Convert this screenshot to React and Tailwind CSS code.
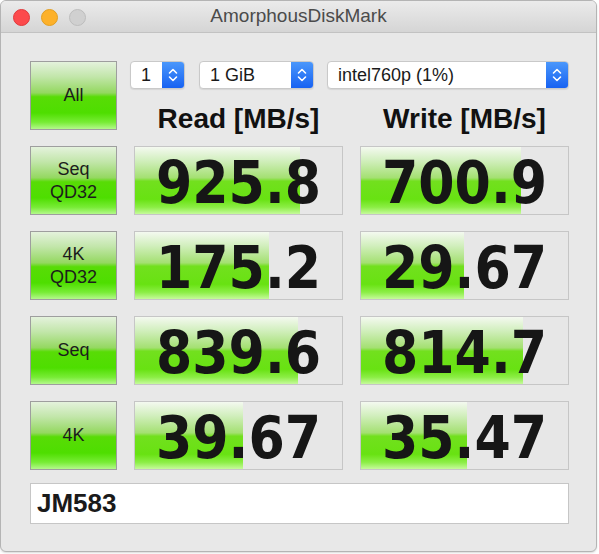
import React from 'react';

const rows = [
  { label: ['Seq', 'QD32'], read: { value: '925.8', bar: 165 }, write: { value: '700.9', bar: 160 } },
  { label: ['4K', 'QD32'], read: { value: '175.2', bar: 134 }, write: { value: '29.67', bar: 103 } },
  { label: ['Seq'], read: { value: '839.6', bar: 163 }, write: { value: '814.7', bar: 162 } },
  { label: ['4K'], read: { value: '39.67', bar: 108 }, write: { value: '35.47', bar: 106 } },
];

const sans = { fontFamily: '"Liberation Sans", Arial, sans-serif' };

function GreenButton({ lines }) {
  return (
    <div className="h-[69px] border border-[#9e9e9e] bg-[linear-gradient(to_bottom,#e4f2dc_0%,#c2e6aa_22%,#94d860_46%,#58dc06_52%,#4ede00_76%,#78ec36_90%,#b4f88c_100%)] flex flex-col items-center justify-center text-[18px] leading-[23px] text-[#1c1c1c]">
      {lines.map((l) => (
        <span key={l}>{l}</span>
      ))}
    </div>
  );
}

function ValueBox({ value, bar }) {
  return (
    <div className="relative h-[69px] border border-[#c6c6c6] bg-[#e7e7e7]">
      <div
        className="absolute left-0 top-0 bottom-0 bg-[linear-gradient(to_bottom,#f4f9f0_0%,#d2efbe_20%,#a4e072_46%,#72e01e_51%,#68e212_78%,#8cee46_90%,#c6fa9c_100%)]"
        style={{ width: bar }}
      />
      <div
        className="relative pt-[6px] text-center text-[58px] leading-[61px] font-bold text-[#161616] font-stretch-condensed"
        style={{ fontFamily: '"DejaVu Sans Condensed", "DejaVu Sans", Verdana, sans-serif' }}
      >
        {value}
      </div>
    </div>
  );
}

function Chevrons() {
  return (
    <svg width="10" height="16" viewBox="0 0 10 16" fill="none" stroke="white" strokeWidth="1.6" strokeLinecap="round" strokeLinejoin="round">
      <path d="M1.5 6 L5 2.5 L8.5 6" />
      <path d="M1.5 10 L5 13.5 L8.5 10" />
    </svg>
  );
}

function Select({ width, text }) {
  return (
    <div
      className="h-[28px] flex bg-white border border-[#c9c9c9] rounded-[4px] shadow-[0_1px_1px_rgba(0,0,0,0.08)] overflow-hidden"
      style={{ width }}
    >
      <div className="flex-1 flex items-center pl-[10px] text-[18px] text-[#1a1a1a]">{text}</div>
      <div className="w-[22px] flex items-center justify-center bg-[linear-gradient(to_bottom,#4a97fb,#1762f2)]">
        <Chevrons />
      </div>
    </div>
  );
}

export default function App() {
  return (
    <div className="w-[599px] h-[554px] bg-white" style={sans}>
      <div className="w-[597px] h-[552px] border border-[#b4b4b4] rounded-[6px] overflow-hidden bg-[#e8e8e8] flex flex-col shadow-[0_1px_2px_rgba(0,0,0,0.15)]">
        <div className="h-[32px] shrink-0 relative flex items-center justify-center border-b border-[#c2c2c2] bg-[linear-gradient(to_bottom,#ebebeb,#d5d5d5)]">
          <div className="absolute left-[12px] top-[8px] flex gap-[11px]">
            <span className="w-[17px] h-[17px] rounded-full bg-[#fc4a4c] border border-[#e0393c]" />
            <span className="w-[17px] h-[17px] rounded-full bg-[#fdb12a] border border-[#e29f22]" />
            <span className="w-[17px] h-[17px] rounded-full bg-[#d0d0d0] border border-[#bdbdbd]" />
          </div>
          <span className="text-[19px] text-[#4b4b4b]">AmorphousDiskMark</span>
        </div>

        <div className="pl-[29px] pt-[28px]">
          <div className="grid grid-cols-[87px_209px_209px] gap-x-[17px] gap-y-[16px]">
            <GreenButton lines={['All']} />
            <div className="col-span-2 h-[69px] flex flex-col">
              <div className="flex gap-[14px] ml-[-4px]">
                <Select width={55} text="1" />
                <Select width={115} text="1 GiB" />
                <div className="ml-[-1px]">
                  <Select width={242} text="intel760p (1%)" />
                </div>
              </div>
              <div className="grid grid-cols-2 gap-x-[17px] mt-[15px] text-[28px] leading-[30px] font-bold text-[#111]">
                <div className="text-center">Read [MB/s]</div>
                <div className="text-center">Write [MB/s]</div>
              </div>
            </div>
            {rows.map((r) => (
              <React.Fragment key={r.read.value}>
                <GreenButton lines={r.label} />
                <ValueBox value={r.read.value} bar={r.read.bar} />
                <ValueBox value={r.write.value} bar={r.write.bar} />
              </React.Fragment>
            ))}
          </div>
          <div className="mt-[13px] w-[539px] h-[41px] bg-white border border-[#c6c6c6] flex items-center pl-[6px] text-[26px] font-bold text-[#1a1a1a]">
            JM583
          </div>
        </div>
      </div>
    </div>
  );
}
